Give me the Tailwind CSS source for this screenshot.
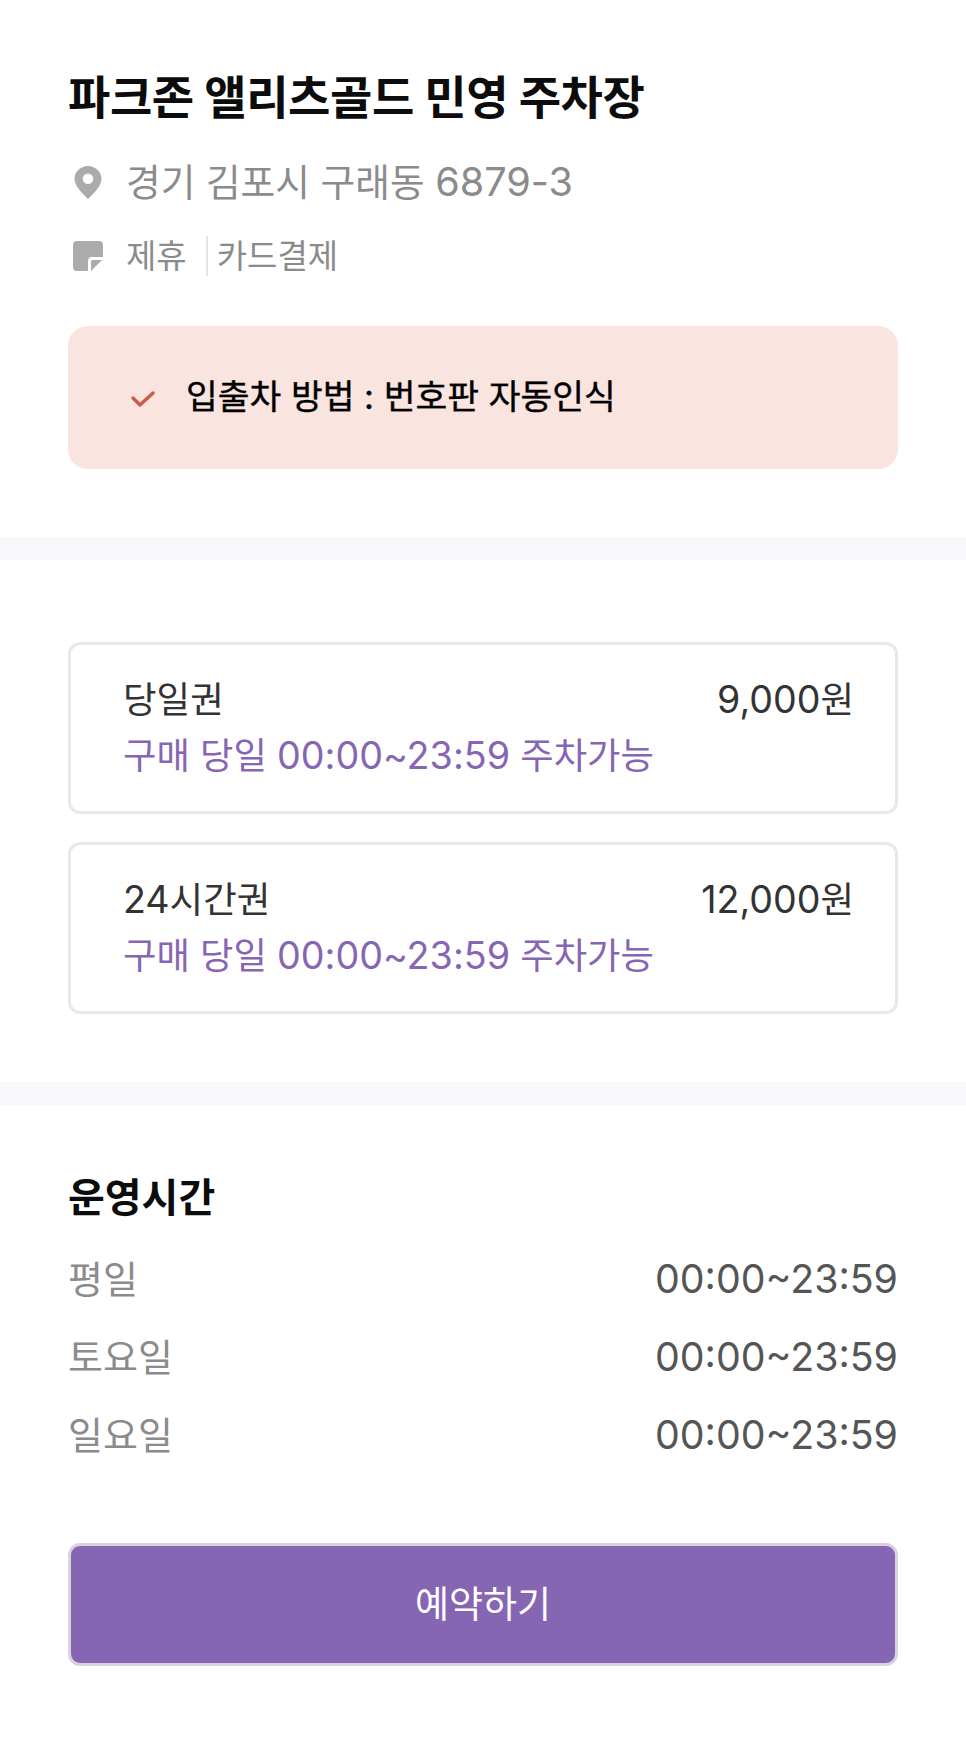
<!DOCTYPE html>
<html lang="ko">
<head>
    <meta charset="UTF-8">
    <title>주차장 상세</title>
    <script src="https://cdn.jsdelivr.net/npm/@tailwindcss/browser@4"></script>
</head>
<body class="bg-white min-h-screen font-['Inter','Noto_Sans_CJK_KR',sans-serif]">
    <section class="h-[537px] px-[68px] pt-[69px]">
        <h1 class="text-[46px] leading-[56px] font-bold text-[#0c0c0c] tracking-[-0.4px]">파크존 앨리츠골드 민영 주차장</h1>
        <div class="flex items-center mt-[31px] h-[52px]">
            <svg class="w-[36px] h-[36px] ml-[2px] shrink-0" viewBox="0 0 36 36"><path fill-rule="evenodd" fill="#ababab" d="M18 2C10.800 2 4.500 7.600 4.500 14.800 4.500 22.500 13 30 18 35c5-5 13.500-12.500 13.500-20.200C31.500 7.600 25.200 2 18 2zm0 7.500a5.300 5.300 0 1 1 0 10.600 5.300 5.300 0 0 1 0-10.600z"/></svg>
            <span class="ml-[20px] text-[37.7px] leading-[52px] text-[#8b8b8b]">경기 김포시 구래동 <span class="text-[39.6px]">6879-3</span></span>
        </div>
        <div class="flex items-center mt-[26px] h-[44px]">
            <svg class="w-[32px] h-[32px] ml-[4px] shrink-0" viewBox="0 0 32 32"><path fill="#ababab" d="M5 1h22a4 4 0 0 1 4 4v12H20a4 4 0 0 0-4 4v10H5a4 4 0 0 1-4-4V5a4 4 0 0 1 4-4z"/><path fill="#ababab" d="M21 20h9L19 31v-9a2 2 0 0 1 2-2z"/></svg>
            <span class="ml-[22px] text-[33px] leading-[44px] text-[#8b8b8b]">제휴</span>
            <span class="ml-[19px] w-[2px] h-[40px] bg-[#e4e4e4]"></span>
            <span class="ml-[9px] text-[33px] leading-[44px] text-[#8b8b8b]">카드결제</span>
        </div>
        <div class="flex items-center mt-[48px] h-[143px] pl-[62px] rounded-[20px] bg-[#f9e4e0]">
            <svg class="w-[26px] h-[20px] mt-[2px] shrink-0" viewBox="0 0 26 20"><path fill="none" stroke="#cd5b45" stroke-width="3.500" stroke-linecap="round" stroke-linejoin="round" d="M3 9l7 7L23 4"/></svg>
            <span class="ml-[30px] mt-[-2px] text-[34.5px] leading-[48px] font-normal text-black [-webkit-text-stroke:0.4px_#000]">입출차 방법 : 번호판 자동인식</span>
        </div>
    </section>
    <div class="h-[23px] bg-[#f8f8fa]"></div>
    <section class="h-[522px] px-[68px] pt-[82px] flex flex-col gap-[28px]">
        <div class="h-[172px] border-[3px] border-[#e8e8ea] rounded-[12px] pl-[52px] pr-[41px] pt-[30px]">
            <div class="flex justify-between text-[36.5px] leading-[50px] text-[#333]"><span>당일권</span><span><span class="text-[37.6px]">9,000</span>원</span></div>
            <p class="mt-[5px] text-[36.3px] leading-[50px] text-[#8665b3]">구매 당일 <span class="text-[37.7px]">00:00~23:59</span> 주차가능</p>
        </div>
        <div class="h-[172px] border-[3px] border-[#e8e8ea] rounded-[12px] pl-[52px] pr-[41px] pt-[30px]">
            <div class="flex justify-between text-[36.5px] leading-[50px] text-[#333]"><span><span class="text-[37.6px]">24</span>시간권</span><span><span class="text-[37.6px]">12,000</span>원</span></div>
            <p class="mt-[5px] text-[36.3px] leading-[50px] text-[#8665b3]">구매 당일 <span class="text-[37.7px]">00:00~23:59</span> 주차가능</p>
        </div>
    </section>
    <div class="h-[23px] bg-[#f8f8fa]"></div>
    <section class="px-[68px] pt-[65px]">
        <h2 class="text-[40px] leading-[56px] font-bold text-[#0c0c0c]">운영시간</h2>
        <div class="mt-[27px] flex flex-col gap-[26px] text-[38px] leading-[52px]">
            <div class="flex justify-between"><span class="text-[#8b8b8b]">평일</span><span class="text-[39.3px] text-[#555]">00:00~23:59</span></div>
            <div class="flex justify-between"><span class="text-[#8b8b8b]">토요일</span><span class="text-[39.3px] text-[#555]">00:00~23:59</span></div>
            <div class="flex justify-between"><span class="text-[#8b8b8b]">일요일</span><span class="text-[39.3px] text-[#555]">00:00~23:59</span></div>
        </div>
        <button class="mt-[82px] w-full h-[123px] rounded-[12px] bg-[#8665b3] border-[3px] border-[#d8d3df] text-white text-[37px]">예약하기</button>
    </section>
</body>
</html>
